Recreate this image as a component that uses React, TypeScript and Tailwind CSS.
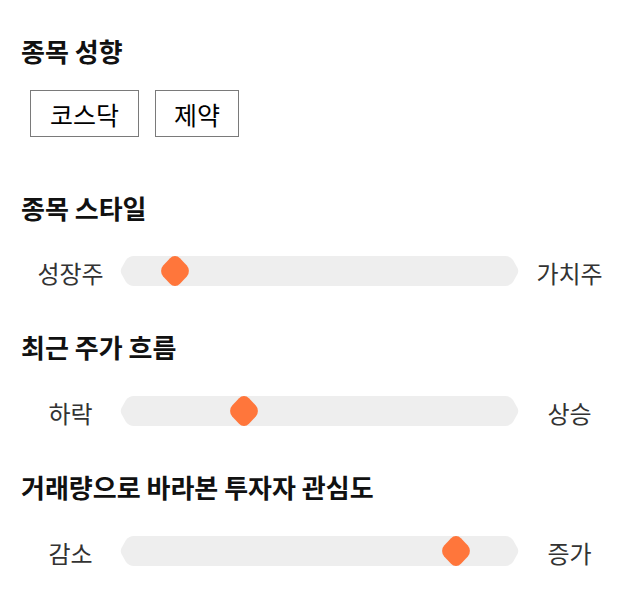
import React from "react";

const font = { fontFamily: '"Malgun Gothic", "Noto Sans CJK KR", "Noto Sans", sans-serif' };

function Track() {
  return (
    <svg width="399" height="30" viewBox="0 0 399 30" className="block">
      <path
        d="M14 0 H385 Q390 0 393 4 L397.5 12 Q399 15 397.5 18 L393 26 Q390 30 385 30 H14 Q9 30 6 26 L1.5 18 Q0 15 1.5 12 L6 4 Q9 0 14 0 Z"
        fill="#eeeeee"
      />
    </svg>
  );
}

function Thumb({ left }: { left: number }) {
  return (
    <svg
      width="30"
      height="32"
      viewBox="0 0 30 32"
      className="absolute top-[-1px]"
      style={{ left: left - 15 }}
    >
      <rect
        x="-11"
        y="-11"
        width="22"
        height="22"
        rx="6.5"
        transform="translate(15 16) scale(1.08 1.17) rotate(45)"
        fill="#ff763b"
      />
    </svg>
  );
}

function SliderRow({ left, right, pos }: { left: string; right: string; pos: number }) {
  return (
    <div className="flex items-center h-[30px]">
      <div className="w-[99px] text-center text-[24px] text-[#333333] leading-[30px] pt-[4px]">{left}</div>
      <div className="relative w-[399px] h-[30px]">
        <Track />
        <Thumb left={pos} />
      </div>
      <div className="w-[101px] text-center text-[24px] text-[#333333] leading-[30px] pt-[4px]">{right}</div>
    </div>
  );
}

export default function App() {
  return (
    <div className="w-[640px] h-[606px] bg-white pl-[21px] pt-[36px]" style={font}>
      <h2 className="text-[26px] font-bold leading-[30px] text-[#111111]">종목 성향</h2>
      <div className="flex gap-[16px] ml-[9px] mt-[24px]">
        <div className="w-[109px] h-[47px] border border-[#7a7a7a] flex items-center justify-center text-[25px] text-black pt-[2px]">
          코스닥
        </div>
        <div className="w-[84px] h-[47px] border border-[#7a7a7a] flex items-center justify-center text-[25px] text-black pt-[2px]">
          제약
        </div>
      </div>

      <h2 className="mt-[56px] text-[26px] font-bold leading-[30px] text-[#111111]">종목 스타일</h2>
      <div className="mt-[33px]">
        <SliderRow left="성장주" right="가치주" pos={55} />
      </div>

      <h2 className="mt-[46px] text-[26px] font-bold leading-[30px] text-[#111111]">최근 주가 흐름</h2>
      <div className="mt-[34px]">
        <SliderRow left="하락" right="상승" pos={124} />
      </div>

      <h2 className="mt-[46px] text-[26px] font-bold leading-[30px] text-[#111111]">거래량으로 바라본 투자자 관심도</h2>
      <div className="mt-[34px]">
        <SliderRow left="감소" right="증가" pos={336} />
      </div>
    </div>
  );
}
